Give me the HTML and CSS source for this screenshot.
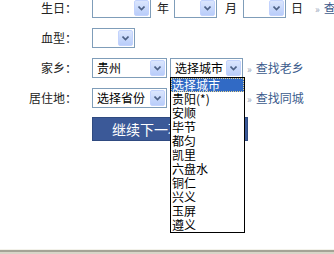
FILE: index.html
```
<!DOCTYPE html>
<html lang="zh-CN">
<head>
  <meta charset="UTF-8" />
  <title>资料填写</title>
  <link rel="stylesheet" href="styles.css">
</head>
<body>

  <div class="form">
    <div class="row">
      <div class="label">生日：</div>
      <div class="select w-year"><span class="value"></span><span class="arrow"><svg width="7" height="5" viewBox="0 0 7 5"><path d="M0.5 0.5 L3.5 3.5 L6.5 0.5" fill="none" stroke="#4d6185" stroke-width="1.6"/></svg></span></div>
      <span class="unit">年</span>
      <div class="select w-small"><span class="value"></span><span class="arrow"><svg width="7" height="5" viewBox="0 0 7 5"><path d="M0.5 0.5 L3.5 3.5 L6.5 0.5" fill="none" stroke="#4d6185" stroke-width="1.6"/></svg></span></div>
      <span class="unit unit-month">月</span>
      <div class="select w-small"><span class="value"></span><span class="arrow"><svg width="7" height="5" viewBox="0 0 7 5"><path d="M0.5 0.5 L3.5 3.5 L6.5 0.5" fill="none" stroke="#4d6185" stroke-width="1.6"/></svg></span></div>
      <span class="unit unit-day">日</span>
      <a class="link" href="#"><span class="raquo">»</span>查找同龄人</a>
    </div>

    <div class="row">
      <div class="label">血型：</div>
      <div class="select w-small"><span class="value"></span><span class="arrow"><svg width="7" height="5" viewBox="0 0 7 5"><path d="M0.5 0.5 L3.5 3.5 L6.5 0.5" fill="none" stroke="#4d6185" stroke-width="1.6"/></svg></span></div>
    </div>

    <div class="row">
      <div class="label">家乡：</div>
      <div class="select w-prov"><span class="value">贵州</span><span class="arrow"><svg width="7" height="5" viewBox="0 0 7 5"><path d="M0.5 0.5 L3.5 3.5 L6.5 0.5" fill="none" stroke="#4d6185" stroke-width="1.6"/></svg></span></div>
      <div class="select w-city open"><span class="value">选择城市</span><span class="arrow"><svg width="7" height="5" viewBox="0 0 7 5"><path d="M0.5 0.5 L3.5 3.5 L6.5 0.5" fill="none" stroke="#4d6185" stroke-width="1.6"/></svg></span>
        <ul class="options">
          <li class="selected">选择城市</li>
          <li>贵阳(*)</li>
          <li>安顺</li>
          <li>毕节</li>
          <li>都匀</li>
          <li>凯里</li>
          <li>六盘水</li>
          <li>铜仁</li>
          <li>兴义</li>
          <li>玉屏</li>
          <li>遵义</li>
        </ul>
      </div>
      <a class="link" href="#"><span class="raquo">»</span>查找老乡</a>
    </div>

    <div class="row">
      <div class="label">居住地：</div>
      <div class="select w-prov"><span class="value">选择省份</span><span class="arrow"><svg width="7" height="5" viewBox="0 0 7 5"><path d="M0.5 0.5 L3.5 3.5 L6.5 0.5" fill="none" stroke="#4d6185" stroke-width="1.6"/></svg></span></div>
      <div class="select w-city under"><span class="value"></span><span class="arrow"><svg width="7" height="5" viewBox="0 0 7 5"><path d="M0.5 0.5 L3.5 3.5 L6.5 0.5" fill="none" stroke="#4d6185" stroke-width="1.6"/></svg></span></div>
      <a class="link" href="#"><span class="raquo">»</span>查找同城</a>
    </div>

    <div class="actions">
      <button class="next-button">继续下一项</button>
    </div>
  </div>

  <div class="statusbar"></div>

</body>
</html>
```

FILE: styles.css
```
* {
  box-sizing: border-box;
}
body {
  font-family: "Noto Sans CJK SC", "Liberation Sans", sans-serif;
  font-size: 12px;
  color: #222;
  background: #fff;
  margin: 0;
  height: 254px;
  overflow: hidden;
  display: flex;
  flex-direction: column;
  white-space: nowrap;
}
.form {
  margin-top: -7px;
}
.row {
  display: flex;
  align-items: center;
  height: 30px;
}
.row > * {
  flex-shrink: 0;
}
.label {
  width: 77px;
  margin-right: 15px;
  text-align: right;
  line-height: 14px;
}

.select {
  position: relative;
  display: flex;
  align-items: center;
  height: 20px;
  border: 1px solid #7f9db9;
  background: #fff;
  padding: 0 1px 0 4px;
}
.select .value {
  flex: 1;
  line-height: 16px;
  color: #000;
}
.select .arrow {
  width: 15px;
  height: 16px;
  border: 1px solid #c3d3fd;
  border-radius: 2px;
  background: linear-gradient(#dbe6fd, #b9cdfa);
  display: flex;
  align-items: center;
  justify-content: center;
}
.w-year { width: 59px; }
.w-small { width: 43px; }
.w-prov { width: 75px; }
.w-city {
  width: 73px;
  margin-left: 3px;
}

.unit {
  margin: 0 5px 0 6px;
  line-height: 14px;
}
.unit-month { margin: 0 6px 0 8px; }
.unit-day { margin: 0 8px 0 5px; }

.link {
  color: #3b5b8c;
  text-decoration: none;
  line-height: 14px;
  margin-left: 4px;
}
.raquo {
  color: #9aa6bb;
  font-size: 10px;
  margin-right: 4px;
}

.options {
  position: absolute;
  top: 100%;
  left: -1px;
  width: 75px;
  margin: 0;
  padding: 0;
  list-style: none;
  background: #fff;
  border: 1px solid #000;
  z-index: 2;
}
.options li {
  height: 14px;
  line-height: 14px;
  padding-left: 1px;
  color: #000;
}
.options li.selected {
  background: #316ac5;
  color: #fff;
  outline: 1px dotted #e8d48c;
  outline-offset: -1px;
}

.actions {
  padding: 4px 0 0 92px;
}
.next-button {
  width: 156px;
  height: 24px;
  border: 1px solid #2f4a80;
  background: #3b5998;
  color: #fff;
  font-family: inherit;
  font-size: 14px;
  text-align: left;
  padding: 0 0 0 19px;
  line-height: 22px;
}

.statusbar {
  margin-top: auto;
  height: 5px;
  background: linear-gradient(#f3f2ea 0 1px, #a5a396 1px 3px, #d8d5c8 3px);
}
```
